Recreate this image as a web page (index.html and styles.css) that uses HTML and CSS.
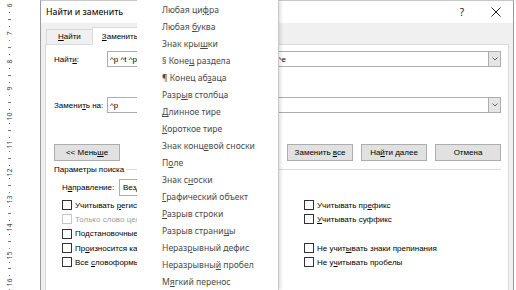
FILE: index.html
```html
<!DOCTYPE html>
<html lang="ru">
<head>
<meta charset="utf-8">
<link rel="stylesheet" href="styles.css">
</head>
<body>
<div class="screen">
  <div class="ruler">
    <div class="seg"><span class="n">6</span><b class="q"></b><b class="h"></b><b class="q"></b></div>
    <div class="seg"><span class="n">7</span><b class="q"></b><b class="h"></b><b class="q"></b></div>
    <div class="seg"><span class="n">8</span><b class="q"></b><b class="h"></b><b class="q"></b></div>
    <div class="seg"><span class="n">9</span><b class="q"></b><b class="h"></b><b class="q"></b></div>
    <div class="seg"><span class="n">10</span><b class="q"></b><b class="h"></b><b class="q"></b></div>
    <div class="seg"><span class="n">11</span><b class="q"></b><b class="h"></b><b class="q"></b></div>
    <div class="seg"><span class="n">12</span><b class="q"></b><b class="h"></b><b class="q"></b></div>
    <div class="seg"><span class="n">13</span><b class="q"></b><b class="h"></b><b class="q"></b></div>
    <div class="seg"><span class="n">14</span><b class="q"></b><b class="h"></b><b class="q"></b></div>
    <div class="seg"><span class="n">15</span><b class="q"></b><b class="h"></b><b class="q"></b></div>
    <div class="seg"><span class="n">16</span><b class="q"></b><b class="h"></b><b class="q"></b></div>
  </div>

  <div class="dialog">
    <div class="titlebar">
      <span class="title">Найти и заменить</span>
      <span class="tb-btn help">?</span>
      <span class="tb-btn close"><svg width="10" height="10" viewBox="0 0 10 10"><path d="M0.5 0.5 L9.5 9.5 M9.5 0.5 L0.5 9.5" stroke="#222" stroke-width="1" fill="none"/></svg></span>
    </div>
    <div class="body">
      <div class="tabs">
        <div class="tab"><u>Н</u>айти</div>
        <div class="tab active"><u>З</u>аменить</div>
        <div class="tab">Перейти</div>
      </div>
      <div class="panel">
        <div class="field-row">
          <span class="label">Найт<u>и</u>:</span>
          <div class="combo">
            <span class="combo-text">^p ^t ^p ^t ^p ^t ^p ^t ^p ^t ^p ^t ^p ^t ^p ^t ^p ^t ^e</span>
            <span class="combo-arrow"><svg width="6" height="4" viewBox="0 0 6 4"><path d="M0.5 0.5 L3 3 L5.5 0.5" stroke="#555" stroke-width="0.9" fill="none"/></svg></span>
          </div>
        </div>
        <div class="field-row replace-row">
          <span class="label">Замени<u>т</u>ь на:</span>
          <div class="combo">
            <span class="combo-text">^p</span>
            <span class="combo-arrow"><svg width="6" height="4" viewBox="0 0 6 4"><path d="M0.5 0.5 L3 3 L5.5 0.5" stroke="#555" stroke-width="0.9" fill="none"/></svg></span>
          </div>
        </div>
        <div class="buttons">
          <span class="btn">&lt;&lt; Мень<u>ш</u>е</span>
          <div class="btn-group">
            <span class="btn"><u>З</u>аменить</span>
            <span class="btn">Заменить <u>в</u>се</span>
            <span class="btn">На<u>й</u>ти далее</span>
            <span class="btn">Отмена</span>
          </div>
        </div>
        <div class="group-title"><span>Параметры поиска</span><i class="rule"></i></div>
        <div class="dir-row">
          <span class="dir-label">Н<u>а</u>правление:</span>
          <span class="select">Везде</span>
        </div>
        <div class="options">
          <div class="col">
            <div class="opt"><i class="box"></i><span>Учитывать <u>р</u>егистр</span></div>
            <div class="opt disabled"><i class="box"></i><span>Только слово целиком</span></div>
            <div class="opt"><i class="box"></i><span>Подстановочные знаки</span></div>
            <div class="opt"><i class="box"></i><span>Пр<u>о</u>износится как</span></div>
            <div class="opt"><i class="box"></i><span>Все <u>с</u>ловоформы (англ.)</span></div>
          </div>
          <div class="col">
            <div class="opt"><i class="box"></i><span>Учитывать пр<u>е</u>фикс</span></div>
            <div class="opt"><i class="box"></i><span><u>У</u>читывать суффикс</span></div>
            <div class="opt blank"></div>
            <div class="opt"><i class="box"></i><span>Не учит<u>ы</u>вать знаки препинания</span></div>
            <div class="opt"><i class="box"></i><span>Не у<u>ч</u>итывать пробелы</span></div>
          </div>
        </div>
      </div>
    </div>
  </div>
  <div class="edge"></div>

  <div class="menu">
    <div class="item">Любая ци<u>ф</u>ра</div>
    <div class="item">Любая <u>б</u>уква</div>
    <div class="item">Знак кры<u>ш</u>ки</div>
    <div class="item">§ Коне<u>ц</u> раздела</div>
    <div class="item">¶ Конец аб<u>з</u>аца</div>
    <div class="item">Разр<u>ы</u>в столбца</div>
    <div class="item"><u>Д</u>линное тире</div>
    <div class="item"><u>К</u>ороткое тире</div>
    <div class="item">Знак конц<u>е</u>вой сноски</div>
    <div class="item">П<u>о</u>ле</div>
    <div class="item">Знак с<u>н</u>оски</div>
    <div class="item"><u>Г</u>рафический объект</div>
    <div class="item"><u>Р</u>азрыв строки</div>
    <div class="item">Разрыв страни<u>ц</u>ы</div>
    <div class="item">Нераз<u>р</u>ывный дефис</div>
    <div class="item">Неразрывны<u>й</u> пробел</div>
    <div class="item">М<u>я</u>гкий перенос</div>
  </div>
</div>
</body>
</html>
```

FILE: styles.css
```css
* { box-sizing: border-box; }
html, body { margin: 0; padding: 0; }
body {
  width: 516px;
  height: 290px;
  overflow: hidden;
  background: #fff;
  font-family: "Liberation Sans", Arial, sans-serif;
  font-size: 8px;
  color: #000;
}
u { text-decoration: underline; text-underline-offset: 1px; text-decoration-thickness: 1px; }

.screen {
  position: relative;
  display: flex;
  height: 290px;
  overflow: hidden;
}

/* vertical ruler */
.ruler {
  flex: none;
  width: 40px;
  padding-top: 2.4px;
  background: #fff;
}
.seg {
  width: 18px;
  height: 27.7px;
  display: grid;
  grid-template-rows: repeat(4, 1fr);
  justify-items: center;
  align-items: center;
}
.n {
  display: block;
  font-family: "Noto Sans", sans-serif;
  font-size: 7px;
  line-height: 7px;
  color: #444;
  transform: rotate(-90deg);
}
.q { display: block; width: 1px; height: 1px; background: #777; }
.h { display: block; width: 3px; height: 1px; background: #777; }

/* dialog */
.dialog {
  flex: none;
  width: 474px;
  height: 300px;
  border: 1px solid #9a9a9a;
  border-top-color: #c8c8c8;
  background: #fff;
  display: flex;
  flex-direction: column;
}
.titlebar {
  flex: none;
  height: 22px;
  display: flex;
  align-items: center;
  padding-left: 5px;
  background: #fff;
}
.title {
  font-family: "Noto Sans", sans-serif;
  font-size: 8.8px;
  flex: 1;
}
.tb-btn {
  width: 34px;
  height: 22px;
  display: flex;
  align-items: center;
  justify-content: center;
  color: #222;
}
.help { font-family: "Noto Sans", sans-serif; font-size: 10px; }

.body {
  flex: 1;
  background: #f0f0f0;
  padding: 4px 4px 0 4px;
}
.tabs {
  display: flex;
  align-items: flex-end;
  height: 17px;
  padding-left: 1px;
  position: relative;
  z-index: 1;
}
.tab {
  height: 15px;
  padding: 0 11px;
  border: 1px solid #d9d9d9;
  border-bottom: none;
  background: #f0f0f0;
  line-height: 14px;
  margin-right: -1px;
}
.tab.active {
  height: 18px;
  background: #fff;
  margin-bottom: -1px;
  padding: 0 9px;
  line-height: 17px;
}
.panel {
  background: #fff;
  border: 1px solid #d9d9d9;
  height: 260px;
  padding: 6px 7px 0 8px;
}

.field-row {
  display: flex;
  align-items: center;
  height: 16px;
}
.replace-row { margin-top: 30px; }
.label { width: 53px; flex: none; }
.combo {
  flex: 1;
  height: 16px;
  border: 1px solid #adadad;
  display: flex;
  align-items: center;
  overflow: hidden;
}
.combo-text {
  flex: 1;
  padding-left: 2px;
  white-space: nowrap;
  overflow: hidden;
}
.combo-arrow {
  flex: none;
  width: 12px;
  height: 14px;
  background: #e5e5e5;
  border-left: 1px solid #adadad;
  display: flex;
  align-items: center;
  justify-content: center;
}

.buttons {
  margin-top: 31px;
  display: flex;
  height: 17px;
}
.btn-group { margin-left: auto; display: flex; gap: 8px; }
.btn {
  display: block;
  width: 66px;
  height: 17px;
  background: #e1e1e1;
  border: 1px solid #adadad;
  text-align: center;
  line-height: 15px;
  white-space: nowrap;
}

.group-title {
  margin-top: 3px;
  height: 11px;
  display: flex;
  align-items: center;
  gap: 2px;
}
.rule { flex: 1; height: 1px; background: #dcdcdc; display: block; }

.dir-row {
  margin-top: 4px;
  height: 17px;
  display: flex;
  align-items: center;
  padding-left: 8px;
}
.dir-label { width: 57px; }
.select {
  width: 120px;
  height: 17px;
  border: 1px solid #adadad;
  padding-left: 3px;
  line-height: 15px;
}

.options {
  margin-top: 2px;
  display: grid;
  grid-template-columns: 242px 1fr;
  padding-left: 8px;
}
.opt {
  height: 14.3px;
  display: flex;
  align-items: center;
  gap: 3px;
  white-space: nowrap;
}
.box {
  display: block;
  width: 10px;
  height: 10px;
  border: 1px solid #333;
  background: #fff;
  flex: none;
}
.opt.disabled { color: #a0a0a0; }
.opt.disabled .box { border-color: #c8c8c8; }

.edge { flex: 1; background: #fff; }

/* popup menu */
.menu {
  position: absolute;
  left: 137px;
  top: 0;
  width: 142px;
  height: 290px;
  background: #fff;
  border-right: 1px solid #c8c8c8;
  box-shadow: 2px 0 3px rgba(0,0,0,0.12);
  padding-top: 2px;
  z-index: 5;
  font-family: "Noto Sans", sans-serif;
  font-size: 8.6px;
}
.item {
  height: 17px;
  line-height: 17px;
  padding-left: 25px;
  color: #4a4a4a;
  white-space: nowrap;
}
```
